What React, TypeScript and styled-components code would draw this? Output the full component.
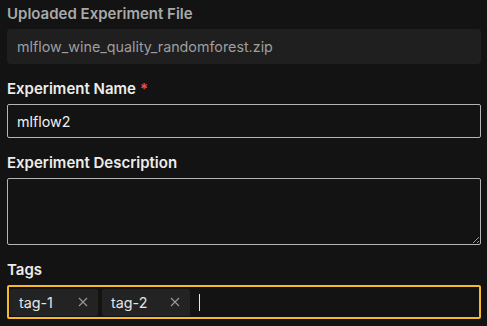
import styled, { createGlobalStyle } from 'styled-components';

const GlobalStyle = createGlobalStyle`
  html, body {
    margin: 0;
    padding: 0;
    background: #131313;
  }
  body {
    font-family: Inter, "Noto Sans", sans-serif;
    -webkit-font-smoothing: antialiased;
  }
`;

const Form = styled.div`
  display: flex;
  flex-direction: column;
  gap: 15px;
  width: 474px;
  padding: 4px 0 0 7px;
`;

const Field = styled.div`
  display: flex;
  flex-direction: column;
  gap: 5px;
`;

const Label = styled.label<{ muted?: boolean }>`
  font-size: 15px;
  line-height: 20px;
  font-weight: 600;
  color: ${({ muted }) => (muted ? '#a9a9a9' : '#ececec')};
`;

const Required = styled.span`
  color: #e2535b;
  margin-left: 4px;
`;

const ReadOnlyBox = styled.div`
  height: 35px;
  box-sizing: border-box;
  padding: 0 10px;
  display: flex;
  align-items: center;
  background: #1f1f1f;
  border-radius: 4px;
  color: #9e9e9e;
  font-size: 14.3px;
`;

const TextInput = styled.input`
  height: 34px;
  box-sizing: border-box;
  padding: 0 9px;
  background: #131313;
  border: 1.5px solid #b5b5b5;
  border-radius: 2px;
  color: #efefef;
  font-family: inherit;
  font-size: 14.3px;
  outline: none;
`;

const TextArea = styled.textarea`
  height: 67px;
  box-sizing: border-box;
  background: #131313;
  border: 1.5px solid #b5b5b5;
  border-radius: 2px;
  color: #efefef;
  font-family: inherit;
  font-size: 14.3px;
  outline: none;
  resize: vertical;
`;

const TagBox = styled.div`
  height: 34px;
  box-sizing: border-box;
  display: flex;
  align-items: center;
  gap: 4px;
  padding: 0 1px;
  border: 2px solid #f7b928;
  border-radius: 2px;
`;

const Chip = styled.div`
  display: flex;
  align-items: center;
  justify-content: space-between;
  box-sizing: border-box;
  width: 88px;
  height: 27px;
  padding: 0 10px 0 9px;
  background: #232323;
  border-radius: 2px;
  color: #e6e6e6;
  font-size: 14.3px;
`;

const Remove = styled.span`
  display: flex;
  color: #9a9a9a;
`;

const Caret = styled.span`
  width: 1px;
  height: 17px;
  background: #e6e6e6;
  margin-left: 5px;
`;

const CloseIcon = () => (
  <svg width="10" height="10" viewBox="0 0 10 10">
    <path d="M1 1L9 9M9 1L1 9" stroke="currentColor" strokeWidth="1.1" />
  </svg>
);

export default function App() {
  return (
    <>
      <GlobalStyle />
      <Form>
        <Field>
          <Label muted>Uploaded Experiment File</Label>
          <ReadOnlyBox>mlflow_wine_quality_randomforest.zip</ReadOnlyBox>
        </Field>
        <Field>
          <Label>
            Experiment Name<Required>*</Required>
          </Label>
          <TextInput defaultValue="mlflow2" />
        </Field>
        <Field>
          <Label>Experiment Description</Label>
          <TextArea />
        </Field>
        <Field>
          <Label>Tags</Label>
          <TagBox>
            {['tag-1', 'tag-2'].map((t) => (
              <Chip key={t}>
                {t}
                <Remove>
                  <CloseIcon />
                </Remove>
              </Chip>
            ))}
            <Caret />
          </TagBox>
        </Field>
      </Form>
    </>
  );
}
